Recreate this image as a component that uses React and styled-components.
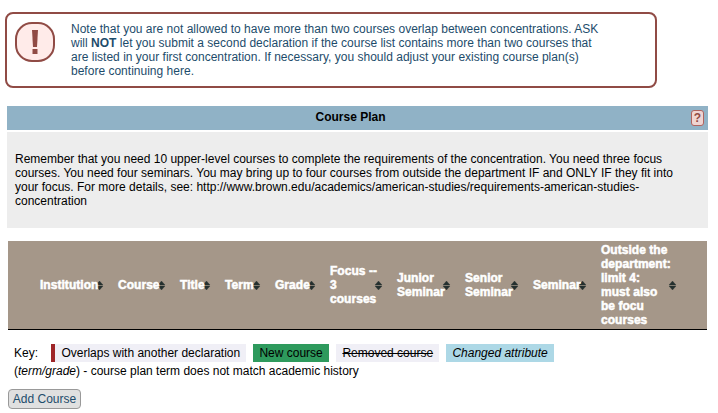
import React from 'react';
import styled, { createGlobalStyle } from 'styled-components';

const columns = [
    { lines: ['Institution'] },
    { lines: ['Course'] },
    { lines: ['Title'] },
    { lines: ['Term'] },
    { lines: ['Grade'] },
    { lines: ['Focus --', '3', 'courses'] },
    { lines: ['Junior', 'Seminar'] },
    { lines: ['Senior', 'Seminar'] },
    { lines: ['Seminar'] },
    { lines: ['Outside the', 'department:', 'limit 4:', 'must also', 'be focu', 'courses'] },
];

const SortIcon = () => (
    <SortSvg width="7" height="9" viewBox="0 0 7 9">
        <path d="M3.5 0L7 4H0z" />
        <path d="M0 5h7L3.5 9z" />
    </SortSvg>
);

const App = () => {
    return (
        <>
            <GlobalStyle />
            <Page>
                <Alert>
                    <AlertIcon>
                        <svg width="6" height="24" viewBox="0 0 6 24">
                            <path d="M0 0h6L5 17H1z" />
                            <path d="M0.5 19h5v5h-5z" />
                        </svg>
                    </AlertIcon>
                    <AlertText>
                        Note that you are not allowed to have more than two courses overlap between concentrations. ASK<br />
                        will <b>NOT</b> let you submit a second declaration if the course list contains more than two courses that<br />
                        are listed in your first concentration. If necessary, you should adjust your existing course plan(s)<br />
                        before continuing here.
                    </AlertText>
                </Alert>

                <TitleBar>
                    <Title>Course Plan</Title>
                    <HelpButton>?</HelpButton>
                </TitleBar>
                <Description>
                    Remember that you need 10 upper-level courses to complete the requirements of the concentration. You need three focus<br />
                    courses. You need four seminars. You may bring up to four courses from outside the department IF and ONLY IF they fit into<br />
                    your focus. For more details, see: http://www.brown.edu/academics/american-studies/requirements-american-studies-<br />
                    concentration
                </Description>

                <TableHead>
                    {columns.map((col, i) => (
                        <HeadCell key={i}>
                            {col.lines.map((line) => (
                                <div key={line}>{line}</div>
                            ))}
                            <SortIcon />
                        </HeadCell>
                    ))}
                </TableHead>

                <KeyRow>
                    <KeyLabel>Key:</KeyLabel>
                    <Chip $width="195px" $overlap>Overlaps with another declaration</Chip>
                    <Chip $width="76px" $bg="#2e9a5d">New course</Chip>
                    <Chip $width="103px" $removed>Removed course</Chip>
                    <Chip $width="108px" $bg="#add8e6" $italic>Changed attribute</Chip>
                </KeyRow>
                <KeyNote>(<i>term/grade</i>) - course plan term does not match academic history</KeyNote>

                <AddButton>Add Course</AddButton>
            </Page>
        </>
    );
};

export default App;

const GlobalStyle = createGlobalStyle`
body {
    margin: 0;
    background-color: #fff;
    font-family: "Liberation Sans", Arial, sans-serif;
    font-size: 12px;
    line-height: 14px;
    color: #000;
}
* {
    box-sizing: border-box;
}
`

const Page = styled.div`
display: flex;
flex-direction: column;
width: 718px;
height: 413px;
padding-top: 12px;
overflow: hidden;
white-space: nowrap;
`

const Alert = styled.div`
display: flex;
width: 652px;
height: 76px;
margin-left: 5px;
padding: 8px;
border: 2px solid #904b45;
border-radius: 8px;
`

const AlertIcon = styled.div`
display: flex;
justify-content: center;
align-items: center;
width: 40px;
height: 40px;
margin-right: 16px;
border: 2px solid #904b45;
border-radius: 17px;
background-color: #ffebe9;
fill: #904b45;
`

const AlertText = styled.div`
color: #1d4c6b;
letter-spacing: 0.01px;
`

const TitleBar = styled.div`
display: flex;
align-items: center;
width: 701px;
height: 24px;
margin: 18px 0 0 7px;
padding: 0 4px 0 3px;
background-color: #90b2c6;
`

const Title = styled.div`
flex: 1;
padding-bottom: 2px;
text-align: center;
font-weight: bold;
`

const HelpButton = styled.button`
width: 13px;
height: 16px;
padding: 0;
border: 1px solid #b0645f;
border-radius: 3px;
background-color: #efd4d2;
color: #904b45;
font: bold 12px/14px "Liberation Sans", Arial, sans-serif;
`

const Description = styled.div`
width: 701px;
height: 96px;
margin: 2px 0 0 7px;
padding: 20px 8px;
background-color: #ededed;
`

const TableHead = styled.div`
display: grid;
grid-template-columns: 64px 48px 31px 36px 41px 53px 54px 54px 54px 76px;
column-gap: 14px;
align-items: center;
width: 699px;
height: 89px;
margin: 13px 0 0 8px;
padding-left: 32px;
border-bottom: 1px solid #000;
background-color: #a59789;
color: #fff;
font-weight: bold;
letter-spacing: 0.04px;
-webkit-text-stroke: 0.5px #fff;
`

const HeadCell = styled.div`
position: relative;
isolation: isolate;
`

// lies under the end of the label when the column is tight
const SortSvg = styled.svg`
position: absolute;
z-index: -1;
right: 1px;
top: calc(50% - 4px);
fill: #25302f;
stroke: #25302f;
stroke-width: 0.3px;
overflow: visible;
`

const KeyRow = styled.div`
display: flex;
gap: 7px;
margin: 14px 0 0 14px;
line-height: 18px;
`

const KeyLabel = styled.div`
width: 30px;
`

const Chip = styled.div`
width: ${(props) => props.$width};
height: 18px;
padding-left: 6.4px;
border-left: ${(props) => (props.$overlap ? '4px solid #9e2528' : 'none')};
background-color: ${(props) => props.$bg || '#f0eff6'};
font-style: ${(props) => (props.$italic ? 'italic' : 'normal')};
text-decoration: ${(props) => (props.$removed ? 'line-through' : 'none')};
`

const KeyNote = styled.div`
margin: 2px 0 0 14px;
`

const AddButton = styled.button`
width: 73px;
height: 20px;
margin: 11px 0 0 8px;
padding: 0;
border: 1px solid #999;
border-radius: 4px;
background-color: #e0e0e0;
color: #1d4c6b;
font: 12px/14px "Liberation Sans", Arial, sans-serif;
`
